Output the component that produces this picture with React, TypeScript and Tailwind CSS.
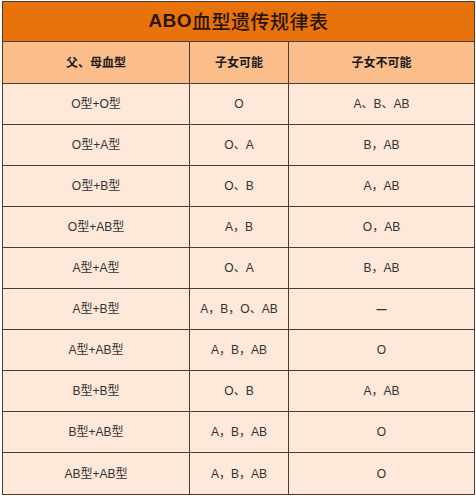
import React from "react";

const rows: [string, string, string][] = [
  ["O型+O型", "O", "A、B、AB"],
  ["O型+A型", "O、A", "B，AB"],
  ["O型+B型", "O、B", "A，AB"],
  ["O型+AB型", "A，B", "O，AB"],
  ["A型+A型", "O、A", "B，AB"],
  ["A型+B型", "A，B，O、AB", "—"],
  ["A型+AB型", "A，B，AB", "O"],
  ["B型+B型", "O、B", "A，AB"],
  ["B型+AB型", "A，B，AB", "O"],
  ["AB型+AB型", "A，B，AB", "O"],
];

const font = {
  fontFamily: '"Liberation Sans", Arial, "Noto Sans CJK SC", sans-serif',
};

export default function App() {
  return (
    <div className="w-[476px] h-[500px] bg-white pt-[1px]" style={font}>
      <div className="ml-[2px] w-[473px] border border-[#4d3a30]">
        <div className="h-[40px] bg-[#e8720c] border-b border-[#4d3a30] flex items-center justify-center text-[19px] text-[#2a1508] tracking-[0.5px]">
          <span className="font-bold">ABO</span>
          <span className="font-medium" style={{ fontFamily: '"Noto Sans CJK SC", sans-serif' }}>血型遗传规律表</span>
        </div>
        <div className="grid grid-cols-[187px_99px_185px] h-[42px] bg-[#fbbd8a] border-b border-[#4d3a30] text-[12px] font-bold text-[#1a1a1a]">
          <div className="flex items-center justify-center border-r border-[#4d3a30]">父、母血型</div>
          <div className="flex items-center justify-center border-r border-[#4d3a30]">子女可能</div>
          <div className="flex items-center justify-center">子女不可能</div>
        </div>
        {rows.map((r, i) => (
          <div
            key={i}
            className={
              "grid grid-cols-[187px_99px_185px] h-[41px] bg-[#fde8da] text-[12px] text-[#333333] " +
              (i < rows.length - 1 ? "border-b border-[#4d3a30]" : "")
            }
          >
            <div className="flex items-center justify-center border-r border-[#4d3a30]">{r[0]}</div>
            <div className="flex items-center justify-center border-r border-[#4d3a30]">{r[1]}</div>
            <div className="flex items-center justify-center">
              {r[2] === "—" ? <span className="text-[10px] font-bold">—</span> : r[2]}
            </div>
          </div>
        ))}
      </div>
    </div>
  );
}
